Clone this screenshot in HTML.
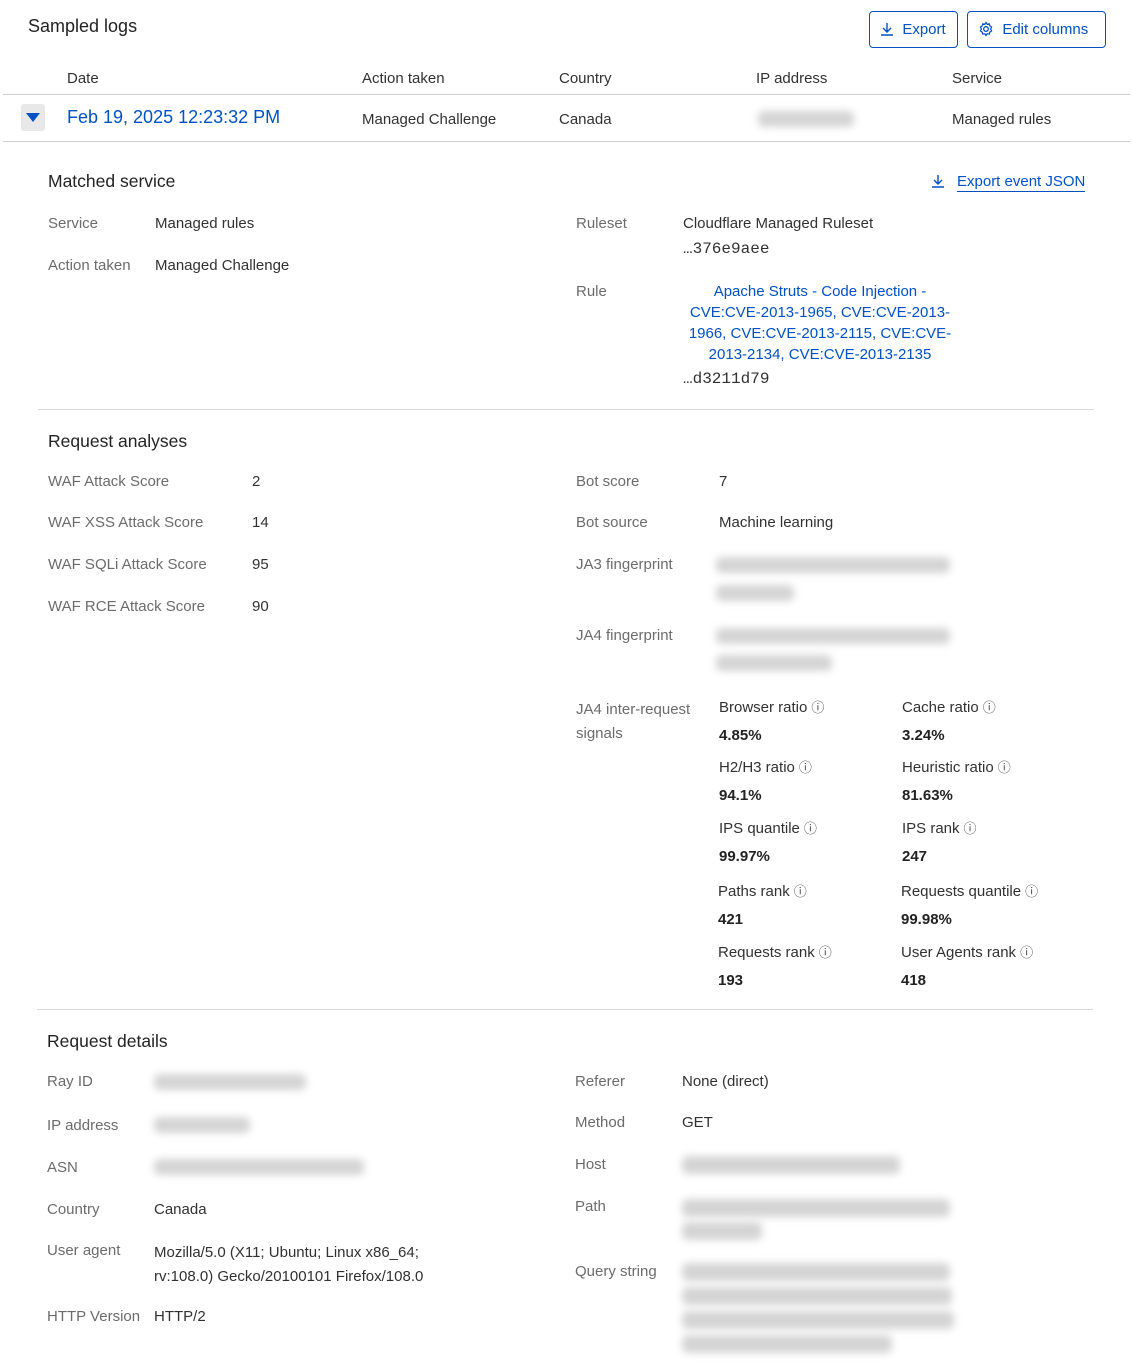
<!DOCTYPE html>
<html><head><meta charset="utf-8"><style>
body{margin:0;width:1132px;height:1367px;background:#fff;font-family:"Liberation Sans",sans-serif;font-size:15px;color:#313131;position:relative;overflow:hidden}
.t{position:absolute;white-space:nowrap;line-height:20px;margin-top:1px}
.l{color:#6b6b6b}
.h{font-size:17.5px;color:#222}
.b{color:#0051c3}
.v{font-weight:600;color:#222}
.bl{position:absolute;background:#d4d4d4;filter:blur(4px);border-radius:6px}
.hr{position:absolute;height:1px;background:#d9d9d9}
.btn{position:absolute;border:1px solid #0051c3;border-radius:4px;color:#0051c3;box-sizing:border-box;line-height:36px;font-size:15px}
.i{font-size:13px;color:#444;margin-left:4px}
</style></head><body>
<div class="t h" style="left:28px;top:15px;font-size:18px">Sampled logs</div>
<div class="btn" style="left:869px;top:11px;width:89px;height:37px;padding-left:10px"><svg width="14" height="14" viewBox="0 0 14 14" style="vertical-align:-2px"><path d="M7 1v9M3 6l4 4 4-4M1 13h12" stroke="#0051c3" stroke-width="1.4" fill="none"/></svg>&nbsp; Export</div>
<div class="btn" style="left:967px;top:11px;width:139px;height:37px;padding-left:10px"><svg width="16" height="16" viewBox="0 0 16 16" style="vertical-align:-3px"><circle cx="8" cy="8" r="2.3" stroke="#0051c3" fill="none" stroke-width="1.3"/><path d="M8 1.5l1.2 1.8 2.1-.5.5 2.1 1.8 1.2-1 1.9 1 1.9-1.8 1.2-.5 2.1-2.1-.5L8 14.5l-1.2-1.8-2.1.5-.5-2.1-1.8-1.2 1-1.9-1-1.9 1.8-1.2.5-2.1 2.1.5z" stroke="#0051c3" fill="none" stroke-width="1.2"/></svg>&nbsp; Edit columns</div>
<div class="t" style="left:67px;top:68px">Date</div>
<div class="t" style="left:362px;top:68px">Action taken</div>
<div class="t" style="left:559px;top:68px">Country</div>
<div class="t" style="left:756px;top:68px">IP address</div>
<div class="t" style="left:952px;top:68px">Service</div>
<div class="hr" style="left:3px;top:94px;width:1127px;background:#cfcfcf"></div>
<div style="position:absolute;left:21px;top:104px;width:24px;height:27px;background:#e8e8e8;border-radius:3px"></div>
<svg style="position:absolute;left:26px;top:112px" width="14" height="10"><path d="M0 1h14L7 10z" fill="#0051c3"/></svg>
<div class="t b" style="left:67px;top:106px;font-size:18px">Feb 19, 2025 12:23:32 PM</div>
<div class="t" style="left:362px;top:109px">Managed Challenge</div>
<div class="t" style="left:559px;top:109px">Canada</div>
<div class="bl" style="left:758px;top:111px;width:96px;height:16px"></div>
<div class="t" style="left:952px;top:109px">Managed rules</div>
<div class="hr" style="left:3px;top:141px;width:1127px;background:#cfcfcf"></div>

<div class="t h" style="left:48px;top:170px">Matched service</div>
<svg style="position:absolute;left:931px;top:174px" width="14" height="14" viewBox="0 0 14 14"><path d="M7 1v9M3 6l4 4 4-4M1 13h12" stroke="#0051c3" stroke-width="1.4" fill="none"/></svg>
<div class="t b" style="left:957px;top:171px;border-bottom:1px solid #0051c3;line-height:19px">Export event JSON</div>
<div class="t l" style="left:48px;top:213px">Service</div>
<div class="t" style="left:155px;top:213px">Managed rules</div>
<div class="t l" style="left:48px;top:255px">Action taken</div>
<div class="t" style="left:155px;top:255px">Managed Challenge</div>
<div class="t l" style="left:576px;top:213px">Ruleset</div>
<div class="t" style="left:683px;top:213px">Cloudflare Managed Ruleset</div>
<div class="t" style="left:683px;top:238px;font-family:'Liberation Mono',monospace;font-size:16px">…376e9aee</div>
<div class="t l" style="left:576px;top:281px">Rule</div>
<div class="t b" style="left:683px;top:280px;width:274px;white-space:normal;text-align:center;line-height:21px">Apache Struts - Code Injection - CVE:CVE-2013-1965, CVE:CVE-2013-1966, CVE:CVE-2013-2115, CVE:CVE-2013-2134, CVE:CVE-2013-2135</div>
<div class="t" style="left:683px;top:368px;font-family:'Liberation Mono',monospace;font-size:16px">…d3211d79</div>
<div class="hr" style="left:38px;top:409px;width:1056px"></div>

<div class="t h" style="left:48px;top:430px">Request analyses</div>
<div class="t l" style="left:48px;top:471px">WAF Attack Score</div><div class="t" style="left:252px;top:471px">2</div>
<div class="t l" style="left:48px;top:512px">WAF XSS Attack Score</div><div class="t" style="left:252px;top:512px">14</div>
<div class="t l" style="left:48px;top:554px">WAF SQLi Attack Score</div><div class="t" style="left:252px;top:554px">95</div>
<div class="t l" style="left:48px;top:596px">WAF RCE Attack Score</div><div class="t" style="left:252px;top:596px">90</div>
<div class="t l" style="left:576px;top:471px">Bot score</div><div class="t" style="left:719px;top:471px">7</div>
<div class="t l" style="left:576px;top:512px">Bot source</div><div class="t" style="left:719px;top:512px">Machine learning</div>
<div class="t l" style="left:576px;top:554px">JA3 fingerprint</div>
<div class="bl" style="left:716px;top:557px;width:234px;height:16px"></div><div class="bl" style="left:716px;top:585px;width:78px;height:16px"></div>
<div class="t l" style="left:576px;top:625px">JA4 fingerprint</div>
<div class="bl" style="left:716px;top:628px;width:234px;height:16px"></div><div class="bl" style="left:716px;top:655px;width:116px;height:16px"></div>
<div class="t l" style="left:576px;top:697px;line-height:24px">JA4 inter-request<br>signals</div>
<div class="t" style="left:719px;top:697px">Browser ratio<span class="i">ⓘ</span></div><div class="t v" style="left:719px;top:725px">4.85%</div>
<div class="t" style="left:902px;top:697px">Cache ratio<span class="i">ⓘ</span></div><div class="t v" style="left:902px;top:725px">3.24%</div>
<div class="t" style="left:719px;top:757px">H2/H3 ratio<span class="i">ⓘ</span></div><div class="t v" style="left:719px;top:785px">94.1%</div>
<div class="t" style="left:902px;top:757px">Heuristic ratio<span class="i">ⓘ</span></div><div class="t v" style="left:902px;top:785px">81.63%</div>
<div class="t" style="left:719px;top:818px">IPS quantile<span class="i">ⓘ</span></div><div class="t v" style="left:719px;top:846px">99.97%</div>
<div class="t" style="left:902px;top:818px">IPS rank<span class="i">ⓘ</span></div><div class="t v" style="left:902px;top:846px">247</div>
<div class="t" style="left:718px;top:881px">Paths rank<span class="i">ⓘ</span></div><div class="t v" style="left:718px;top:909px">421</div>
<div class="t" style="left:901px;top:881px">Requests quantile<span class="i">ⓘ</span></div><div class="t v" style="left:901px;top:909px">99.98%</div>
<div class="t" style="left:718px;top:942px">Requests rank<span class="i">ⓘ</span></div><div class="t v" style="left:718px;top:970px">193</div>
<div class="t" style="left:901px;top:942px">User Agents rank<span class="i">ⓘ</span></div><div class="t v" style="left:901px;top:970px">418</div>
<div class="hr" style="left:37px;top:1009px;width:1056px"></div>

<div class="t h" style="left:47px;top:1030px">Request details</div>
<div class="t l" style="left:47px;top:1071px">Ray ID</div><div class="bl" style="left:154px;top:1074px;width:152px;height:16px"></div>
<div class="t l" style="left:47px;top:1115px">IP address</div><div class="bl" style="left:154px;top:1117px;width:96px;height:16px"></div>
<div class="t l" style="left:47px;top:1157px">ASN</div><div class="bl" style="left:154px;top:1159px;width:210px;height:16px"></div>
<div class="t l" style="left:47px;top:1199px">Country</div><div class="t" style="left:154px;top:1199px">Canada</div>
<div class="t l" style="left:47px;top:1240px">User agent</div><div class="t" style="left:154px;top:1240px;line-height:24px">Mozilla/5.0 (X11; Ubuntu; Linux x86_64;<br>rv:108.0) Gecko/20100101 Firefox/108.0</div>
<div class="t l" style="left:47px;top:1306px">HTTP Version</div><div class="t" style="left:154px;top:1306px">HTTP/2</div>
<div class="t l" style="left:575px;top:1071px">Referer</div><div class="t" style="left:682px;top:1071px">None (direct)</div>
<div class="t l" style="left:575px;top:1112px">Method</div><div class="t" style="left:682px;top:1112px">GET</div>
<div class="t l" style="left:575px;top:1154px">Host</div><div class="bl" style="left:682px;top:1156px;width:218px;height:18px"></div>
<div class="t l" style="left:575px;top:1196px">Path</div><div class="bl" style="left:682px;top:1199px;width:268px;height:18px"></div><div class="bl" style="left:682px;top:1222px;width:80px;height:18px"></div>
<div class="t l" style="left:575px;top:1261px">Query string</div>
<div class="bl" style="left:682px;top:1263px;width:268px;height:18px"></div><div class="bl" style="left:682px;top:1287px;width:270px;height:18px"></div><div class="bl" style="left:682px;top:1311px;width:272px;height:18px"></div><div class="bl" style="left:682px;top:1335px;width:210px;height:18px"></div>
</body></html>
